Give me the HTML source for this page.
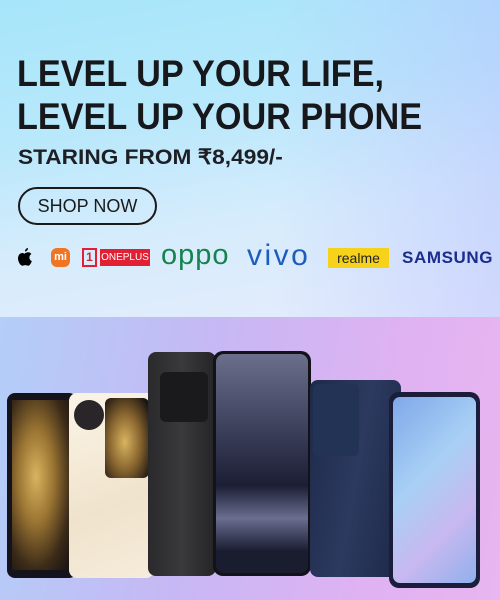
<!DOCTYPE html>
<html><head><style>
*{margin:0;padding:0;box-sizing:border-box}
body{width:500px;height:600px;overflow:hidden;font-family:"Liberation Sans",sans-serif;position:relative;background:#dfe9fb}
.top{position:absolute;left:0;top:0;width:500px;height:317px;background:linear-gradient(170deg,#a6e5fa 0%,#b8e8fb 35%,#d6ecfc 65%,#e6ecfc 100%)}
.top::after{content:"";position:absolute;inset:0;background:linear-gradient(90deg,rgba(0,0,0,0) 55%,rgba(180,190,255,.45) 100%)}
.bot{position:absolute;left:0;top:317px;width:500px;height:283px;background:linear-gradient(100deg,#b3cef8 0%,#c6b8f4 40%,#e0b2f2 75%,#e8b6f0 100%)}
h1{position:absolute;left:17px;top:52px;font-size:37px;line-height:43px;font-weight:bold;color:#17181c;z-index:2;transform:scaleX(.925);transform-origin:0 0;white-space:nowrap}
.sub{position:absolute;left:18px;top:145px;font-size:21px;font-weight:bold;color:#1d1f24;z-index:2;transform:scaleX(1.08);transform-origin:0 0;white-space:nowrap}
.btn{position:absolute;left:18px;top:187px;width:139px;height:38px;border:2px solid #1a1a1a;border-radius:20px;font-size:18px;text-align:center;line-height:34px;color:#1a1a1a;z-index:2}
.logos{position:absolute;top:245px;left:0;width:500px;height:26px;z-index:2}
.logos>*{position:absolute}
.ph{position:absolute;border-radius:8px}
</style></head><body>
<div class="top"></div>
<div class="bot"></div>
<h1>LEVEL UP YOUR LIFE,<br>LEVEL UP YOUR PHONE</h1>
<div class="sub">STARING FROM ₹8,499/-</div>
<div class="btn">SHOP NOW</div>
<div class="logos">
 <svg style="left:17px;top:3px" width="16" height="18" viewBox="0 0 16 18"><path d="M11 0c0 2-1.5 3.5-3 3.5C8 1.5 9.5 0 11 0zM8 5c1 0 2-.8 3.2-.8 1.5 0 2.5.8 3.2 1.8-1.5 1-2 2-2 3.5 0 1.8 1 3 2.4 3.6-.6 2-2 4.6-3.6 4.6-1 0-1.6-.6-2.8-.6-1.3 0-2 .6-3 .6C3.5 17.7 1 14 1 10.4 1 7 3.3 5 5.3 5 6.5 5 7.2 5.8 8 5.8z" fill="#000"/></svg>
 <div style="left:51px;top:3px;width:19px;height:19px;background:#f07523;border-radius:6px;color:#fff;font-size:11px;font-weight:bold;text-align:center;line-height:19px">mi</div>
 <div style="left:82px;top:3px;width:15px;height:19px;border:2px solid #e22033;color:#e22033;font-size:12px;font-weight:bold;text-align:center;line-height:15px">1</div>
 <div style="left:100px;top:4px;width:50px;height:17px;background:#e22033;color:#fff;font-size:10px;text-align:center;line-height:17px">ONEPLUS</div>
 <div style="left:161px;top:-6px;font-size:29px;color:#168252;letter-spacing:1px">oppo</div>
 <div style="left:247px;top:-6px;font-size:30px;color:#1c5cbf;letter-spacing:2.5px">vivo</div>
 <div style="left:328px;top:3px;width:61px;height:20px;background:#f7d21b;color:#222;font-size:14px;text-align:center;line-height:20px">realme</div>
 <div style="left:402px;top:3px;font-size:17px;font-weight:bold;color:#1a2d8c;letter-spacing:.6px">SAMSUNG</div>
</div>
<div class="ph" style="left:7px;top:393px;width:70px;height:185px;background:#14121a"></div>
<div style="position:absolute;left:12px;top:400px;width:60px;height:170px;background:radial-gradient(ellipse at 40% 45%,#d8b460 0%,#9a7432 35%,#3a2a18 70%,#120e10 100%)"></div>
<div class="ph" style="left:69px;top:393px;width:85px;height:185px;background:linear-gradient(160deg,#fbf4e6,#efe3cc 60%,#f6ecdb)"></div>
<div style="position:absolute;left:74px;top:400px;width:30px;height:30px;border-radius:50%;background:#2a2528"></div>
<div style="position:absolute;left:105px;top:398px;width:44px;height:80px;border-radius:6px;background:radial-gradient(ellipse at 45% 55%,#d8b460,#8a6630 45%,#1a1410 90%)"></div>
<div class="ph" style="left:148px;top:352px;width:68px;height:224px;background:linear-gradient(90deg,#2a2a2c,#3a3a3c 50%,#242426)"></div>
<div style="position:absolute;left:160px;top:372px;width:48px;height:50px;border-radius:6px;background:#1a1a1c"></div>
<div class="ph" style="left:213px;top:351px;width:98px;height:225px;border-radius:10px;background:#121218"></div>
<div style="position:absolute;left:216px;top:354px;width:92px;height:219px;border-radius:8px;background:linear-gradient(180deg,#6b6f8c 0%,#3c3f5a 35%,#1c1e34 60%,#6a6e90 75%,#1a1c30 90%)"></div>
<div class="ph" style="left:310px;top:380px;width:91px;height:197px;background:linear-gradient(100deg,#1e2a4a,#2c3a60 50%,#1c2846)"></div>
<div style="position:absolute;left:313px;top:384px;width:46px;height:72px;border-radius:5px;background:#233356"></div>
<div class="ph" style="left:389px;top:392px;width:91px;height:196px;border-radius:10px;background:#1a1e3a"></div>
<div style="position:absolute;left:393px;top:397px;width:83px;height:186px;border-radius:7px;background:linear-gradient(135deg,#80a8ea 0%,#a8d0f4 40%,#c8b8f0 70%,#90b0ec 100%)"></div>
</body></html>
